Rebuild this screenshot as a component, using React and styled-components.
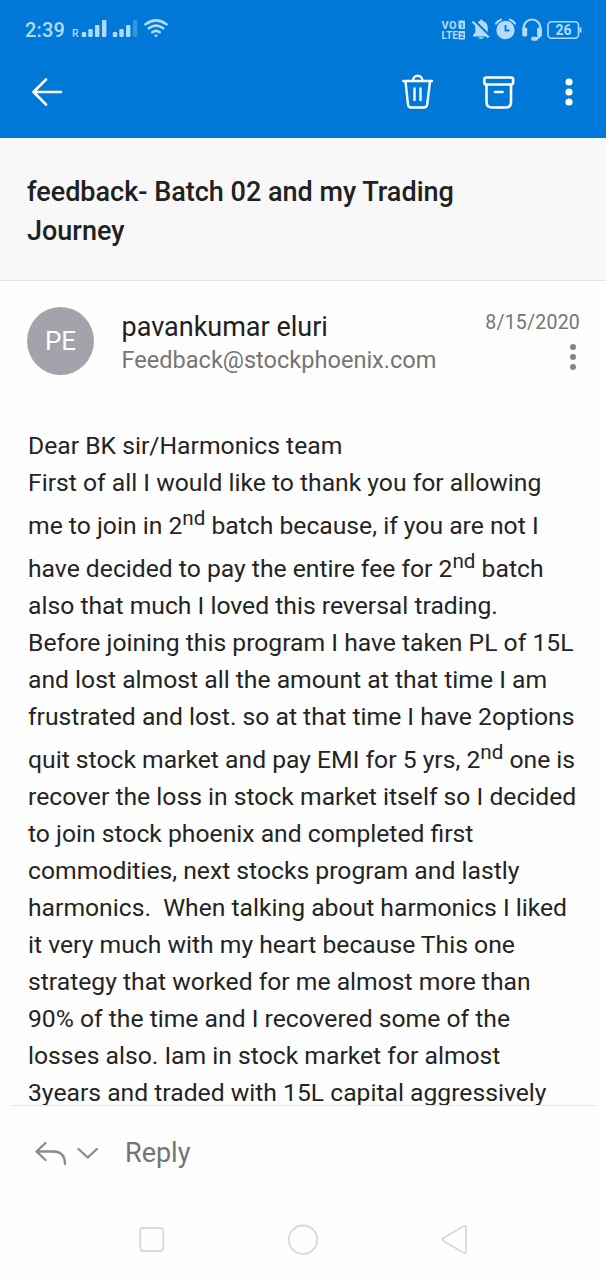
import React from 'react';
import styled, { createGlobalStyle } from 'styled-components';

const GlobalStyle = createGlobalStyle`
* { box-sizing: border-box; }
body {
  margin: 0;
  background: #fff;
  font-family: Roboto, "Liberation Sans", sans-serif;
}
`;

const Screen = styled.div`
  width: 606px;
  height: 1280px;
  display: flex;
  flex-direction: column;
  overflow: hidden;
  background: #fefefe;
`;

const Header = styled.header`
  height: 138px;
  flex: none;
  background: #0078d7;
  color: #fff;
`;

const StatusBar = styled.div`
  height: 60px;
  padding: 0 24px 0 25px;
  display: flex;
  align-items: center;
  justify-content: space-between;
  color: #b2dbfb;
`;

const StatusGroup = styled.div`
  display: flex;
  align-items: center;
`;

const Clock = styled.span`
  width: 47px;
  font-size: 20px;
  font-weight: 500;
  line-height: 24px;
  letter-spacing: 0.2px;
`;

const Toolbar = styled.div`
  height: 64px;
  padding: 0 33px 0 30px;
  display: flex;
  align-items: center;
  justify-content: space-between;
`;

const Actions = styled.div`
  display: flex;
  align-items: center;
`;

const IconSlot = styled.span`
  display: flex;
  margin-left: ${(props) => props.$gap || 0}px;
`;

const Subject = styled.h1`
  height: 143px;
  flex: none;
  margin: 0;
  padding: 35px 100px 0 27px;
  background: #f8f8f8;
  border-bottom: 1px solid #e5e5e5;
  color: #212121;
  font-size: 27px;
  font-weight: 500;
  line-height: 39px;
`;

const Sender = styled.section`
  height: 146px;
  flex: none;
  padding: 26px 26px 0 27px;
  display: flex;
`;

const Avatar = styled.div`
  width: 67px;
  height: 68px;
  display: flex;
  align-items: center;
  justify-content: center;
  border-radius: 50%;
  background: #a4a2ab;
  color: #fff;
  font-size: 26px;
`;

const SenderInfo = styled.div`
  flex: 1;
  padding: 3px 0 0 27.5px;
`;

const SenderName = styled.div`
  color: #212121;
  font-size: 27px;
  line-height: 34px;
`;

const SenderEmail = styled.div`
  color: #757575;
  font-size: 23.55px;
  line-height: 33px;
`;

const Meta = styled.div`
  display: flex;
  flex-direction: column;
  align-items: flex-end;
  padding-top: 1px;
  color: #757575;
  font-size: 19.5px;
  line-height: 30px;
  letter-spacing: 0.22px;
`;

const MetaMenu = styled.span`
  display: flex;
  padding: 4px 3px 0 0;
  color: #858585;
`;

const Body = styled.main`
  height: 678px;
  flex: none;
  margin: 0 10px;
  padding-left: 18px;
  overflow: hidden;
  color: #242424;
`;

const Line = styled.div`
  height: ${(props) => (props.$raised ? 43 : 37)}px;
  padding-top: ${(props) => (props.$raised ? 6 : 0)}px;
  font-size: 24.7px;
  line-height: 37px;
  white-space: pre;
`;

const Sup = styled.sup`
  font-size: 20.6px;
  line-height: 0;
  vertical-align: 9px;
`;

const ReplyBar = styled.footer`
  height: 95px;
  flex: none;
  margin: 0 10px;
  padding-left: 25px;
  display: flex;
  align-items: center;
  border-top: 1px solid #e6e6e6;
  color: #757575;
`;

const ReplyLabel = styled.span`
  margin-left: 26px;
  font-size: 27px;
  line-height: 34px;
`;

const NavBar = styled.nav`
  height: 80px;
  flex: none;
  padding: 0 136px;
  display: flex;
  align-items: center;
  justify-content: space-between;
`;

const lines = [
  { text: 'Dear BK sir/Harmonics team' },
  { text: 'First of all I would like to thank you for allowing' },
  { text: 'me to join in 2', after: ' batch because, if you are not I' },
  { text: 'have decided to pay the entire fee for 2', after: ' batch' },
  { text: 'also that much I loved this reversal trading.' },
  { text: 'Before joining this program I have taken PL of 15L' },
  { text: 'and lost almost all the amount at that time I am' },
  { text: 'frustrated and lost. so at that time I have 2options' },
  { text: 'quit stock market and pay EMI for 5 yrs, 2', after: ' one is' },
  { text: 'recover the loss in stock market itself so I decided' },
  { text: 'to join stock phoenix and completed first' },
  { text: 'commodities, next stocks program and lastly' },
  { text: 'harmonics.  When talking about harmonics I liked' },
  { text: 'it very much with my heart because This one' },
  { text: 'strategy that worked for me almost more than' },
  { text: '90% of the time and I recovered some of the' },
  { text: 'losses also. Iam in stock market for almost' },
  { text: '3years and traded with 15L capital aggressively' },
];

const SignalIcons = () => (
  <svg width="96" height="24" viewBox="72 18 96 24" fill="currentColor">
    <text x="72" y="37.3" fontSize="10.5" fontWeight="500" fontFamily="Roboto">R</text>
    <rect x="81.8" y="32" width="4.4" height="5" rx="1" />
    <rect x="88.3" y="29" width="4.4" height="8" rx="1" />
    <rect x="95" y="25" width="4.4" height="12" rx="1" />
    <rect x="102" y="20" width="4.4" height="17" rx="1" />
    <rect x="112.8" y="32" width="4.4" height="5" rx="1" />
    <rect x="119.3" y="29" width="4.4" height="8" rx="1" />
    <rect x="126" y="25" width="4.4" height="12" rx="1" />
    <rect x="133" y="20" width="4.4" height="17" rx="1" opacity="0.3" />
    <g fill="none" stroke="currentColor" strokeWidth="2.6" strokeLinecap="round">
      <path d="M145.500 24.200Q156 16.500 166.500 24.200" />
      <path d="M148.800 28.300Q156 22.800 163.200 28.300" />
      <path d="M152.300 32.200Q156 29.600 159.700 32.200" />
    </g>
    <path d="M153.800 35Q156 33.800 158.200 35L156 37.500z" />
  </svg>
);

const VolteIcon = () => (
  <svg width="25" height="22" viewBox="441 19 25 22" fill="currentColor">
    <g fontFamily="Roboto" fontSize="11" fontWeight="700">
      <text x="441.500" y="28.600" textLength="15">VO</text>
      <text x="441.500" y="39.300" textLength="16.500" lengthAdjust="spacingAndGlyphs">LTE</text>
    </g>
    <rect x="458.500" y="20.500" width="6.500" height="8.500" rx="1" />
    <rect x="458.500" y="31" width="6.500" height="8.500" rx="1" />
    <g fill="#0078d7" fontFamily="Roboto" fontSize="8" fontWeight="700">
      <text x="459.500" y="27.600">1</text>
      <text x="459.500" y="38.100">2</text>
    </g>
  </svg>
);

const StatusIcons = () => (
  <svg width="75" height="26" viewBox="470 17 75 26" fill="currentColor">
    <path d="M473 36.500v-1.500l2.200-2.500v-5c0-4 2-6 4.800-6.500c.2-2 2.500-2 2.700 0c3 .6 5 3 5 6.500v5l2 2.500v1.500z" />
    <path d="M478.500 37.300h5c-.5 2.200-4.500 2.200-5 0z" />
    <path d="M473.500 19.500L490 36" stroke="#0078d7" strokeWidth="2.200" />
    <path d="M472.500 21.500L488.500 37.500" stroke="currentColor" strokeWidth="2" />
    <circle cx="505.500" cy="30" r="9.200" />
    <path d="M505.500 25v5.500h4" fill="none" stroke="#0078d7" strokeWidth="1.800" />
    <path d="M496 23.500Q498 20.500 501 19.700M510 19.700Q513 20.500 515 23.500" fill="none" stroke="currentColor" strokeWidth="2.200" strokeLinecap="round" />
    <path d="M523.500 31v-3a8.500 8.500 0 0 1 17 0v6c0 3-2 4.500-7 4.500" fill="none" stroke="currentColor" strokeWidth="2.200" />
    <rect x="522.300" y="27.500" width="4.900" height="9" rx="1.500" />
    <rect x="537" y="27.500" width="4.900" height="9" rx="1.500" />
    <rect x="531" y="36.700" width="7" height="4" rx="2" />
  </svg>
);

const BatteryIcon = () => (
  <svg width="35" height="20" viewBox="547 19 35 20">
    <rect x="548" y="20.700" width="30.500" height="16.600" rx="3.500" fill="none" stroke="currentColor" strokeWidth="1.600" />
    <path d="M580.500 26.500v5" stroke="currentColor" strokeWidth="2" />
    <text x="555.500" y="34.400" fontSize="14" fontWeight="700" fontFamily="Roboto" fill="currentColor">26</text>
  </svg>
);

const BackIcon = () => (
  <svg width="34" height="30" viewBox="30 77 34 30" fill="none" stroke="currentColor" strokeWidth="2.600" strokeLinecap="round" strokeLinejoin="round">
    <path d="M46 79.500L33.500 92L46 104.500M33.500 92H61" />
  </svg>
);

const TrashIcon = () => (
  <svg width="32" height="36" viewBox="402 74 32 36" fill="none" stroke="currentColor" strokeWidth="2.400" strokeLinecap="round" strokeLinejoin="round">
    <path d="M403.300 81H432M413 80.500a4.700 4.700 0 0 1 9.400 0" />
    <path d="M405.500 81.500L408 104.500Q408.400 107.500 411 107.500H424Q426.700 107.500 427.200 104.500L430 81.500" />
    <path d="M414.500 88.500V100M420.500 88.500V100" />
  </svg>
);

const ArchiveIcon = () => (
  <svg width="32" height="36" viewBox="483 74 32 36" fill="none" stroke="currentColor" strokeWidth="2.600" strokeLinecap="round" strokeLinejoin="round">
    <rect x="484.300" y="77.500" width="28.800" height="7" rx="2" />
    <path d="M486.500 85V102Q486.500 107.500 492 107.500H505.500Q511 107.500 511 102V85M495 92H502.500" />
  </svg>
);

const DotsIcon = ({ radius, gap }) => (
  <svg width="8" height="30" viewBox="-4 -15 8 30" fill="currentColor">
    <circle cy={-gap} r={radius} />
    <circle r={radius} />
    <circle cy={gap} r={radius} />
  </svg>
);

const ReplyIcon = () => (
  <svg width="64" height="26" viewBox="35 1140 64 26" fill="none" stroke="#8a8a8a" strokeWidth="2.300" strokeLinecap="round" strokeLinejoin="round">
    <path d="M45.500 1143L36.500 1151.500L45.500 1160M36.500 1151.500H53Q65 1151.500 65 1164" />
    <path d="M78.500 1149L87.700 1157.500L97 1149" />
  </svg>
);

const NavIcon = ({ children }) => (
  <svg width="32" height="32" viewBox="0 0 32 32" fill="none" stroke="#d9d9d9" strokeWidth="1.800" strokeLinejoin="round">
    {children}
  </svg>
);

export default function App() {
  return (
    <Screen>
      <GlobalStyle />
      <Header>
        <StatusBar>
          <StatusGroup>
            <Clock>2:39</Clock>
            <SignalIcons />
          </StatusGroup>
          <StatusGroup>
            <VolteIcon />
            <IconSlot $gap={4}><StatusIcons /></IconSlot>
            <IconSlot $gap={2}><BatteryIcon /></IconSlot>
          </StatusGroup>
        </StatusBar>
        <Toolbar>
          <BackIcon />
          <Actions>
            <TrashIcon />
            <IconSlot $gap={49}><ArchiveIcon /></IconSlot>
            <IconSlot $gap={50}><DotsIcon radius={3.6} gap={10} /></IconSlot>
          </Actions>
        </Toolbar>
      </Header>
      <Subject>feedback- Batch 02 and my Trading Journey</Subject>
      <Sender>
        <Avatar>PE</Avatar>
        <SenderInfo>
          <SenderName>pavankumar eluri</SenderName>
          <SenderEmail>Feedback@stockphoenix.com</SenderEmail>
        </SenderInfo>
        <Meta>
          8/15/2020
          <MetaMenu><DotsIcon radius={3} gap={10} /></MetaMenu>
        </Meta>
      </Sender>
      <Body>
        {lines.map((line) => (
          <Line key={line.text} $raised={Boolean(line.after)}>
            {line.text}
            {line.after && <Sup>nd</Sup>}
            {line.after}
          </Line>
        ))}
      </Body>
      <ReplyBar>
        <ReplyIcon />
        <ReplyLabel>Reply</ReplyLabel>
      </ReplyBar>
      <NavBar>
        <NavIcon><rect x="4.200" y="4" width="23" height="23" rx="3" /></NavIcon>
        <NavIcon><circle cx="16" cy="15.700" r="14.200" /></NavIcon>
        <NavIcon><path d="M5.500 14Q3.500 15.500 5.500 17L25 28.500Q28 30 28 27V4Q28 1 25 2.500z" /></NavIcon>
      </NavBar>
    </Screen>
  );
}
